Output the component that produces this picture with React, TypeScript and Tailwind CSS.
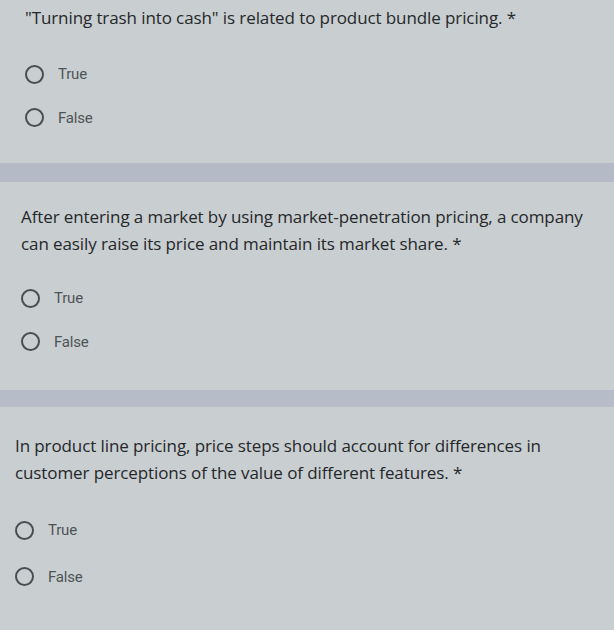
import React from 'react';

type Q = { lines: string[]; pad: string; gap: string; textTop: string; optTop: string; optGap: string; cardH: string };

function Radio({ label }: { label: string }) {
  return (
    <div className="flex items-center gap-[14px]">
      <span className="w-[19px] h-[19px] rounded-full border-[2.5px] border-[#4a4e52] shrink-0" />
      <span className="text-[15px] text-[#4f5457] tracking-[-0.2px]" style={{ fontFamily: 'Roboto, "Liberation Sans", sans-serif' }}>
        {label}
      </span>
    </div>
  );
}

function Question({ q }: { q: Q }) {
  return (
    <div className={`bg-[#c9ced0] ${q.pad} ${q.textTop} ${q.cardH} flex flex-col`}>
      <div
        className="text-[17px] leading-[27px] text-[#25282b] whitespace-nowrap tracking-[-0.1px]"
        style={{ fontFamily: '"Open Sans", "Noto Sans", sans-serif' }}
      >
        {q.lines.map((l, i) => (
          <div key={i}>{l}</div>
        ))}
      </div>
      <div className={`flex flex-col ${q.optTop} ${q.optGap}`}>
        <Radio label="True" />
        <Radio label="False" />
      </div>
    </div>
  );
}

const questions: Q[] = [
  {
    lines: ['"Turning trash into cash" is related to product bundle pricing. *'],
    pad: 'pl-[25px]',
    textTop: 'pt-[4px]',
    optTop: 'mt-[32px]',
    optGap: 'gap-[21px]',
    cardH: 'h-[163px]',
  },
  {
    lines: [
      'After entering a market by using market-penetration pricing, a company',
      'can easily raise its price and maintain its market share. *',
    ],
    pad: 'pl-[21px]',
    textTop: 'pt-[21px]',
    optTop: 'mt-[30px]',
    optGap: 'gap-[21px]',
    cardH: 'h-[208px]',
  },
  {
    lines: [
      'In product line pricing, price steps should account for differences in',
      'customer perceptions of the value of different features. *',
    ],
    pad: 'pl-[15px]',
    textTop: 'pt-[25px]',
    optTop: 'mt-[33px]',
    optGap: 'gap-[24px]',
    cardH: 'h-[223px]',
  },
];

export default function App() {
  return (
    <div className="w-[614px] h-[630px] overflow-hidden bg-[#c9ced0] flex flex-col">
      <Question q={questions[0]} />
      <div className="h-[19px] bg-[#b4bbc7]" />
      <Question q={questions[1]} />
      <div className="h-[17px] bg-[#b6bdc8]" />
      <Question q={questions[2]} />
    </div>
  );
}
